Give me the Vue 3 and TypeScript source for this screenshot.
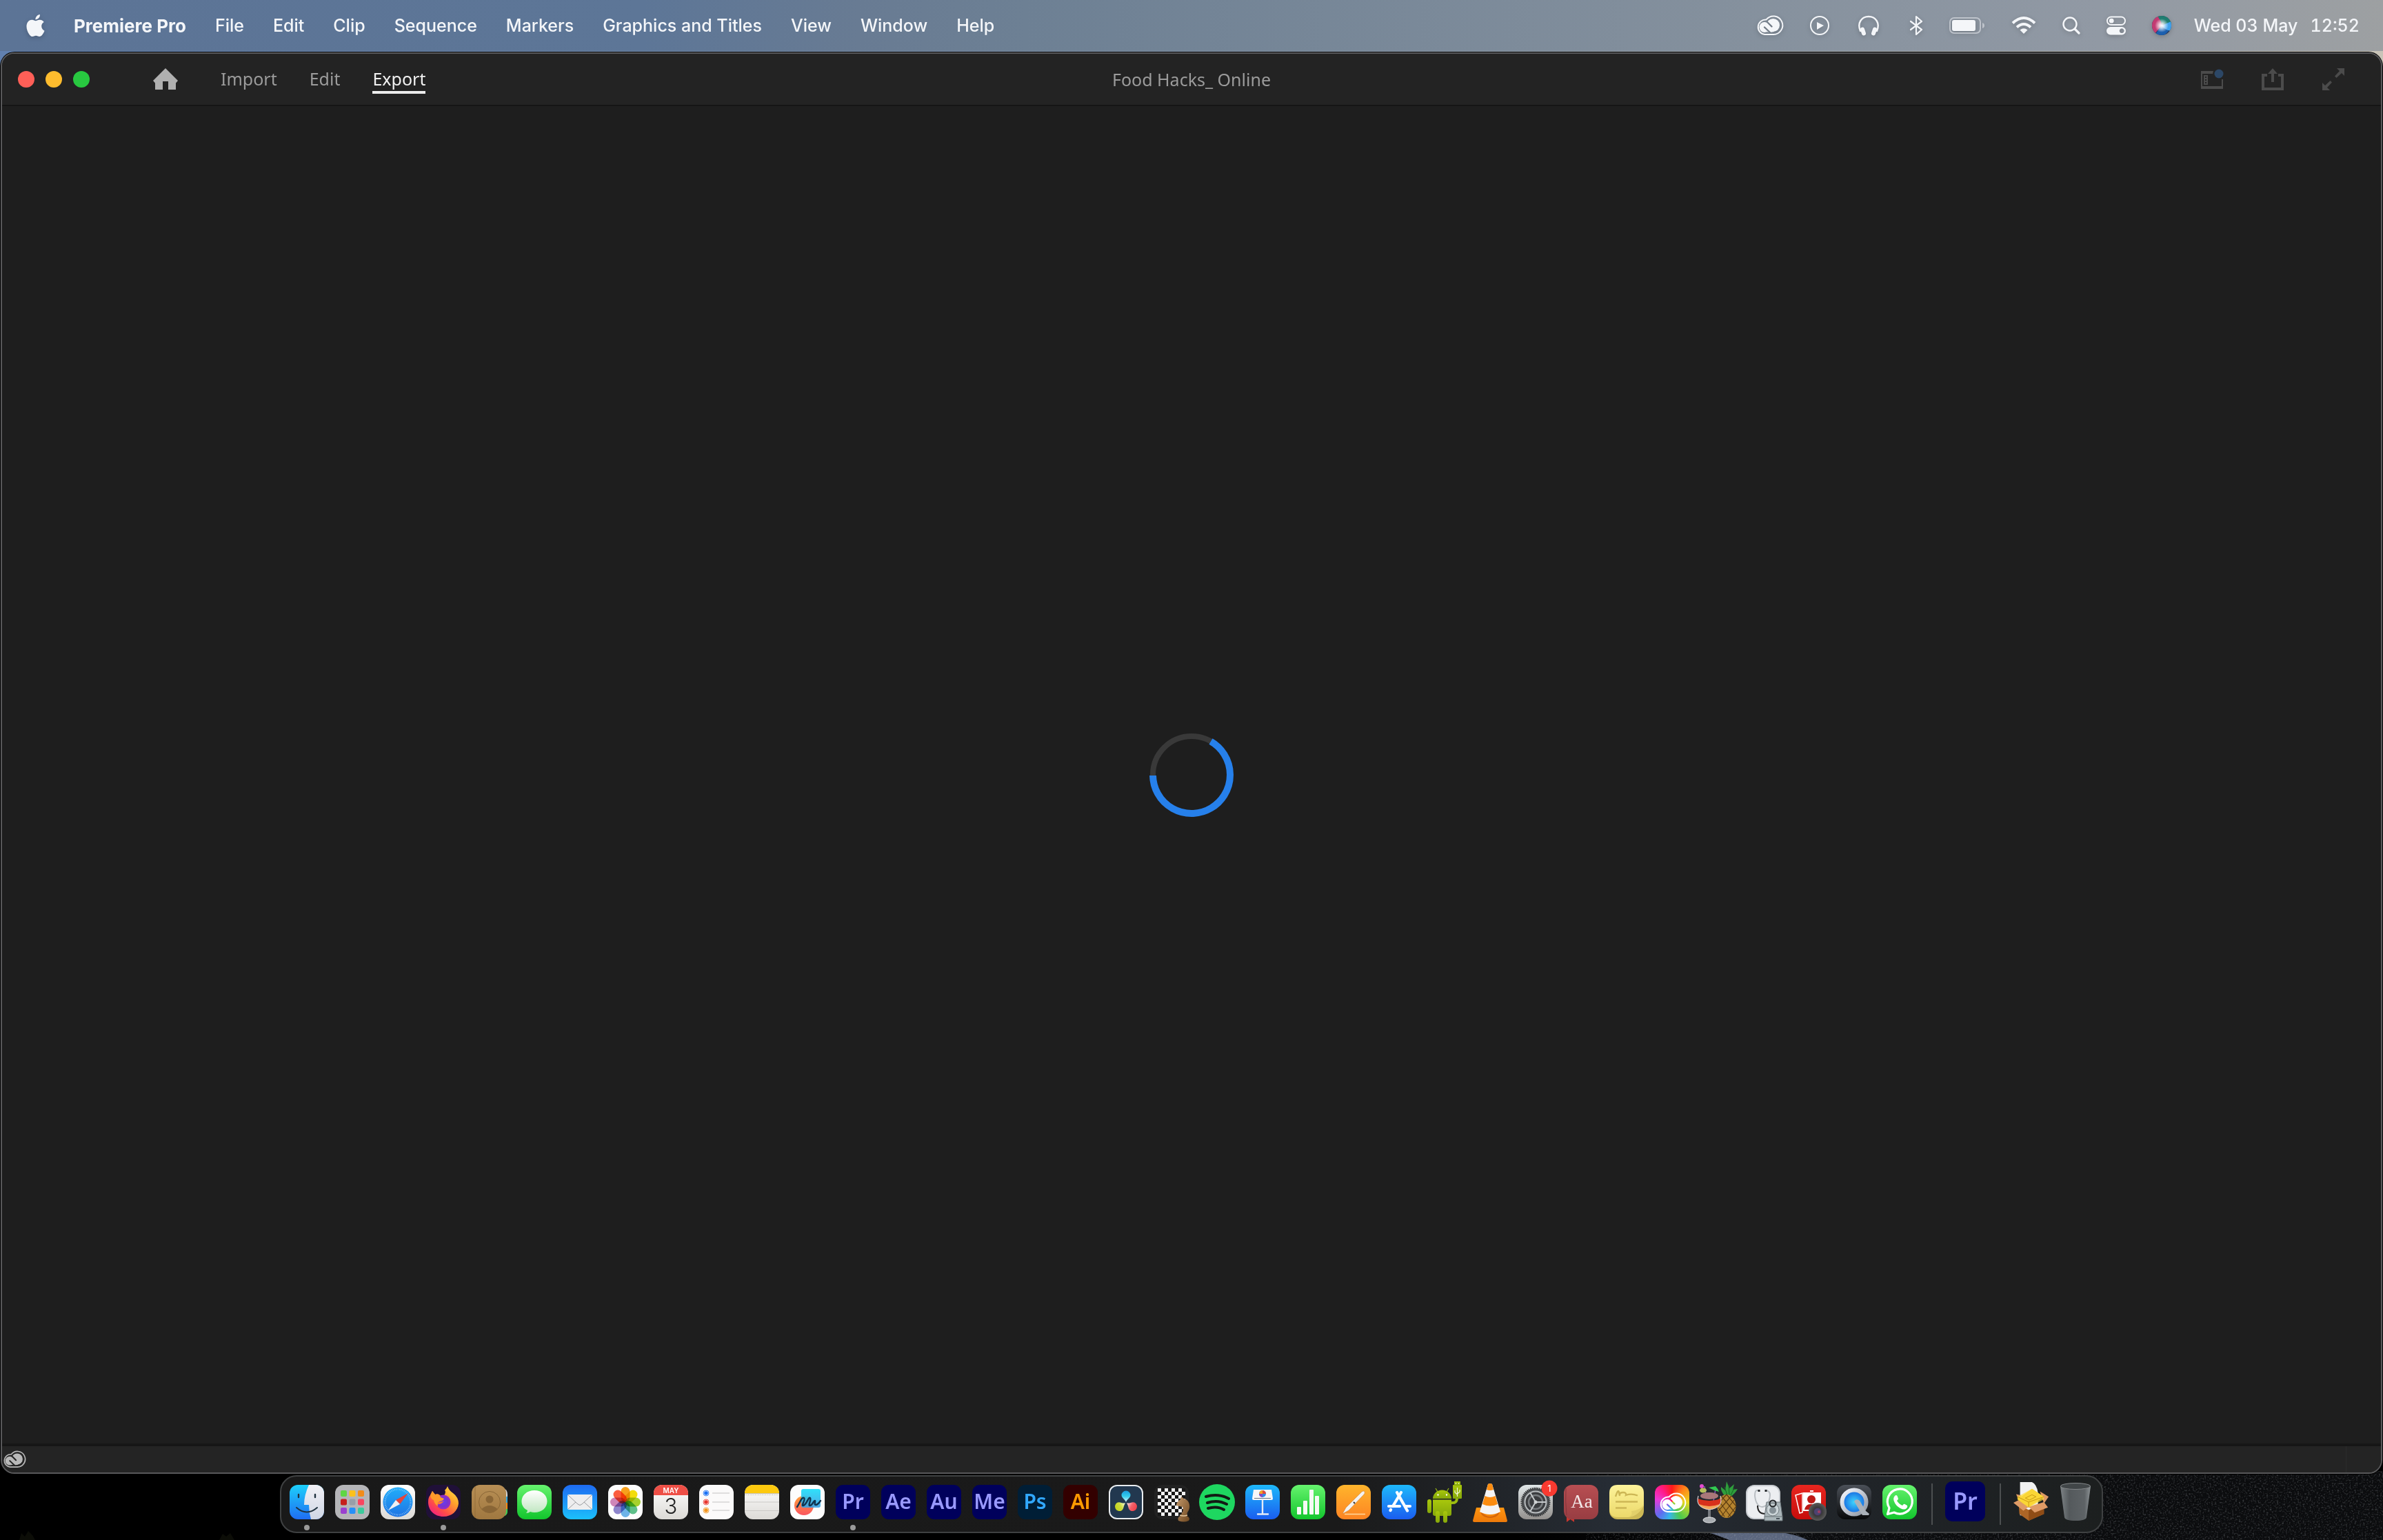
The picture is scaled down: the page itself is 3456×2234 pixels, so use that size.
<script setup lang="ts">
interface DockApp {
  id: string
  name: string
  running?: boolean
  letters?: string
  tile?: string
  ink?: string
}

const menus: string[] = ['File', 'Edit', 'Clip', 'Sequence', 'Markers', 'Graphics and Titles', 'View', 'Window', 'Help']

const apps: DockApp[] = [
  { id: 'finder', name: 'Finder', running: true },
  { id: 'launchpad', name: 'Launchpad' },
  { id: 'safari', name: 'Safari' },
  { id: 'firefox', name: 'Firefox', running: true },
  { id: 'contacts', name: 'Contacts' },
  { id: 'messages', name: 'Messages' },
  { id: 'mail', name: 'Mail' },
  { id: 'photos', name: 'Photos' },
  { id: 'calendar', name: 'Calendar' },
  { id: 'reminders', name: 'Reminders' },
  { id: 'notes', name: 'Notes' },
  { id: 'freeform', name: 'Freeform' },
  { id: 'pr', name: 'Premiere Pro', running: true, letters: 'Pr', tile: '#00005b', ink: '#9999ff' },
  { id: 'ae', name: 'After Effects', letters: 'Ae', tile: '#00005b', ink: '#9999ff' },
  { id: 'au', name: 'Audition', letters: 'Au', tile: '#00005b', ink: '#9999ff' },
  { id: 'me', name: 'Media Encoder', letters: 'Me', tile: '#00005b', ink: '#9999ff' },
  { id: 'ps', name: 'Photoshop', letters: 'Ps', tile: '#001e36', ink: '#31a8ff' },
  { id: 'ai', name: 'Illustrator', letters: 'Ai', tile: '#330000', ink: '#ff9a00' },
  { id: 'davinci', name: 'DaVinci Resolve' },
  { id: 'chess', name: 'Chess' },
  { id: 'spotify', name: 'Spotify' },
  { id: 'keynote', name: 'Keynote' },
  { id: 'numbers', name: 'Numbers' },
  { id: 'pages', name: 'Pages' },
  { id: 'appstore', name: 'App Store' },
  { id: 'android', name: 'Android File Transfer' },
  { id: 'vlc', name: 'VLC' },
  { id: 'settings', name: 'System Settings' },
  { id: 'dictionary', name: 'Dictionary' },
  { id: 'stickies', name: 'Stickies' },
  { id: 'cc', name: 'Creative Cloud' },
  { id: 'pina', name: 'Pineapple' },
  { id: 'disk', name: 'Disk Utility' },
  { id: 'booth', name: 'Photo Booth' },
  { id: 'quicktime', name: 'QuickTime Player' },
  { id: 'whatsapp', name: 'WhatsApp' },
]

const petals = [
  { turn: 0, fill: '#f7a01c' },
  { turn: 45, fill: '#f2dd0a' },
  { turn: 90, fill: '#a6d12c' },
  { turn: 135, fill: '#5fc08a' },
  { turn: 180, fill: '#6db3e8' },
  { turn: 225, fill: '#8e86cc' },
  { turn: 270, fill: '#cf86b8' },
  { turn: 315, fill: '#fb5d3f' },
]

const launchTiles = ['#5fd644', '#fcc11c', '#f28c1a', '#c61f1c', '#989fa8', '#fa4560', '#9a40cf', '#2690f8', '#3cca9c']
const reminderDots = [{ y: 12, c: '#1a72f5' }, { y: 25, c: '#e8352f' }, { y: 37, c: '#f3941c' }]
</script>

<template>
  <div class="desktop">
    <svg class="defs" width="0" height="0" aria-hidden="true">
      <defs>
        <linearGradient id="g-finder" x2="0" y2="1"><stop stop-color="#1dd0fb" /><stop offset="1" stop-color="#1f6df2" /></linearGradient>
        <linearGradient id="g-face" x2="0" y2="1"><stop stop-color="#f2f1f6" /><stop offset="1" stop-color="#cfd6e4" /></linearGradient>
        <linearGradient id="g-safari" x2="0" y2="1"><stop stop-color="#21aefa" /><stop offset="1" stop-color="#1f74e4" /></linearGradient>
        <linearGradient id="g-fire" x1="1" y1="0" x2="0.2" y2="1"><stop stop-color="#fff04a" /><stop offset="0.4" stop-color="#ffa32b" /><stop offset="0.75" stop-color="#ff4a4a" /><stop offset="1" stop-color="#ee1f83" /></linearGradient>
        <linearGradient id="g-green" x2="0" y2="1"><stop stop-color="#66f36e" /><stop offset="1" stop-color="#12c52c" /></linearGradient>
        <linearGradient id="g-mail" x2="0" y2="1"><stop stop-color="#1e6bf1" /><stop offset="1" stop-color="#1cc0fb" /></linearGradient>
        <linearGradient id="g-blue" x2="0" y2="1"><stop stop-color="#1eb9fb" /><stop offset="1" stop-color="#1a5df0" /></linearGradient>
        <linearGradient id="g-orange" x2="0" y2="1"><stop stop-color="#ffb52c" /><stop offset="1" stop-color="#fd8423" /></linearGradient>
        <linearGradient id="g-paper" x2="0" y2="1"><stop stop-color="#ffffff" /><stop offset="1" stop-color="#dcdad6" /></linearGradient>
        <linearGradient id="g-bubble" x2="0" y2="1"><stop stop-color="#ffffff" /><stop offset="1" stop-color="#bfe6c0" /></linearGradient>
        <linearGradient id="g-contacts" x2="0" y2="1"><stop stop-color="#b88f55" /><stop offset="1" stop-color="#a07840" /></linearGradient>
        <linearGradient id="g-grey" x2="0" y2="1"><stop stop-color="#dfe6e8" /><stop offset="1" stop-color="#94918e" /></linearGradient>
        <linearGradient id="g-cone" x2="0" y2="1"><stop stop-color="#ff9510" /><stop offset="1" stop-color="#ee7a0a" /></linearGradient>
        <linearGradient id="g-book" x2="0" y2="1"><stop stop-color="#b84e52" /><stop offset="1" stop-color="#983d42" /></linearGradient>
        <linearGradient id="g-sticky" x2="0" y2="1"><stop stop-color="#fdf39a" /><stop offset="1" stop-color="#ecd96b" /></linearGradient>
        <linearGradient id="g-red" x2="0" y2="1"><stop stop-color="#e8261f" /><stop offset="1" stop-color="#c60d0b" /></linearGradient>
        <linearGradient id="g-dark" x2="0" y2="1"><stop stop-color="#4b5058" /><stop offset="1" stop-color="#08090a" /></linearGradient>
        <linearGradient id="g-q" x2="1" y2="1"><stop stop-color="#f5f8ff" /><stop offset="1" stop-color="#8c94a0" /></linearGradient>
        <linearGradient id="g-bronze" x2="1" y2="1"><stop stop-color="#c4996a" /><stop offset="1" stop-color="#6e4720" /></linearGradient>
        <linearGradient id="g-bin" x2="1" y2="0"><stop stop-color="#7d8386" /><stop offset="0.3" stop-color="#54595c" /><stop offset="0.8" stop-color="#5e6366" /><stop offset="1" stop-color="#8d9396" /></linearGradient>
        <linearGradient id="g-free" x2="0" y2="1"><stop stop-color="#18defb" /><stop offset="1" stop-color="#3c9fe2" /></linearGradient>
        <linearGradient id="g-coral" x2="0" y2="1"><stop stop-color="#ff9f3a" /><stop offset="1" stop-color="#fb5560" /></linearGradient>
        <linearGradient id="g-droid" x2="0" y2="1"><stop stop-color="#a9c70c" /><stop offset="1" stop-color="#86a80a" /></linearGradient>
        <linearGradient id="g-drop-blue" x2="0" y2="1"><stop stop-color="#1a9ee0" /><stop offset="0.5" stop-color="#34cdec" /><stop offset="1" stop-color="#e8fbff" /></linearGradient>
        <linearGradient id="g-drop-red" x2="0" y2="1"><stop stop-color="#ee3f48" /><stop offset="0.5" stop-color="#f2616a" /><stop offset="1" stop-color="#ffe9ea" /></linearGradient>
        <linearGradient id="g-drop-lime" x2="0" y2="1"><stop stop-color="#c2d31c" /><stop offset="0.5" stop-color="#cddb3e" /><stop offset="1" stop-color="#fbfde0" /></linearGradient>
        <linearGradient id="g-ground"><stop stop-color="#0b0c0e" stop-opacity="0" /><stop offset="0.3" stop-color="#0b0c0e" /></linearGradient>
        <radialGradient id="g-globe"><stop stop-color="#6a3cf0" /><stop offset="0.6" stop-color="#7634cf" /><stop offset="1" stop-color="#a02bc0" /></radialGradient>
        <radialGradient id="g-qblue"><stop stop-color="#3fd6fd" /><stop offset="1" stop-color="#1464e0" /></radialGradient>
        <radialGradient id="g-lens"><stop stop-color="#7d83a8" /><stop offset="0.4" stop-color="#40324e" /><stop offset="0.5" stop-color="#3a3a3a" /><stop offset="1" stop-color="#5b5b5b" /></radialGradient>
        <radialGradient id="g-siri"><stop stop-color="#ffffff" /><stop offset="0.3" stop-color="#ffffff" stop-opacity="0.8" /><stop offset="1" stop-color="#ffffff" stop-opacity="0" /></radialGradient>
        <clipPath id="tile-clip"><rect width="50" height="50" rx="12" /></clipPath>
        <clipPath id="siri-clip"><circle cx="14" cy="14" r="14" /></clipPath>
        <mask id="cloud-mask" maskUnits="userSpaceOnUse" x="0" y="0" width="40" height="30">
          <circle cx="12" cy="17.5" r="7.5" fill="#fff" />
          <circle cx="24.5" cy="14.5" r="9.5" fill="#fff" />
          <path d="M12 10L26 24L20 25L8 23Z" fill="#fff" />
          <path d="M14 8L22.5 16.5M12 17.5L22 27" stroke="#000" stroke-width="2.4" stroke-linecap="round" fill="none" />
        </mask>
        <g id="cloud">
          <path d="M12.5 28A10.6 10.6 0 1 1 14.5 6.500A13.3 13.3 0 1 1 24.5 28Z" fill="none" stroke="currentColor" stroke-width="2" />
          <rect width="40" height="30" fill="currentColor" mask="url(#cloud-mask)" />
        </g>
        <path id="drop" d="M25 25C23 20 18.5 19 18.5 15A6.5 6.5 0 0 1 31.500 15C31.500 19 27 20 25 25Z" />
        <pattern id="checks" width="10" height="10" patternUnits="userSpaceOnUse" x="5" y="5"><rect width="10" height="10" fill="#161616" /><path d="M0 0h5v5H0zM5 5h5v5H5z" fill="#f2f2f2" /></pattern>
        <filter id="grain" x="0" y="0" width="1" height="1">
          <feTurbulence type="fractalNoise" baseFrequency="0.4" numOctaves="2" seed="4" />
          <feColorMatrix values="0 0 0 0 0.4  0 0 0 0 0.43  0 0 0 0 0.46  1.4 0 0 0 -0.7" />
        </filter>
      </defs>
    </svg>

    <svg class="ground" viewBox="0 0 3456 100" preserveAspectRatio="none" aria-hidden="true">
      <rect x="2200" width="1256" height="100" fill="url(#g-ground)" />
      <path d="M2474 88H2578Q2606 92 2622 100H2508Q2488 92 2474 88Z" fill="#5b667e" />
      <rect x="2300" width="1156" height="100" filter="url(#grain)" opacity="0.6" />
      <path d="M28 100l3-10 5 5 5-8 6 6 4 7zM318 100l5-9 5 4 6-5 6 10z" fill="#0c0d07" />
    </svg>

    <header class="menubar">
      <nav class="menus" aria-label="Menu bar">
        <button aria-label="Apple menu">
          <svg width="27" height="32" viewBox="2 0 20 24"><path fill="currentColor" d="M12.152 6.896c-.948 0-2.415-1.078-3.96-1.04-2.04.027-3.91 1.183-4.961 3.014-2.117 3.675-.546 9.103 1.519 12.09 1.013 1.454 2.208 3.09 3.792 3.039 1.52-.065 2.09-.987 3.935-.987 1.831 0 2.35.987 3.96.948 1.637-.026 2.676-1.48 3.676-2.948 1.156-1.688 1.636-3.325 1.662-3.415-.039-.013-3.182-1.221-3.22-4.857-.026-3.04 2.48-4.494 2.597-4.559-1.429-2.09-3.623-2.324-4.39-2.376-2-.156-3.675 1.09-4.61 1.09zM15.53 3.83c.843-1.012 1.4-2.427 1.245-3.83-1.207.052-2.662.805-3.532 1.818-.78.896-1.454 2.338-1.273 3.714 1.338.104 2.715-.688 3.559-1.701" /></svg>
        </button>
        <button class="app-name">Premiere Pro</button>
        <button v-for="menu in menus" :key="menu">{{ menu }}</button>
      </nav>
      <div class="status">
        <button aria-label="Creative Cloud"><svg width="40" height="30" viewBox="0 0 40 30"><use href="#cloud" /></svg></button>
        <button class="playing" aria-label="Now playing"><svg width="28" height="30" viewBox="0 0 28 30"><circle cx="14" cy="15" r="13" fill="none" stroke="currentColor" stroke-width="2" /><path d="M10 10l10 5-10 6z" fill="currentColor" /></svg></button>
        <button aria-label="Sound"><svg width="30" height="30" viewBox="0 0 30 30" fill="none" stroke="currentColor" stroke-linecap="round"><path d="M3 23C-2 11 5 2 15 2s17 9 12 21" stroke-width="2.4" /><path d="M6 20.500L8 26.500M24 20.500L22 26.500" stroke-width="6" /></svg></button>
        <button class="bluetooth" aria-label="Bluetooth"><svg width="20" height="30" viewBox="0 0 20 30" fill="none" stroke="currentColor" stroke-width="2.2" stroke-linejoin="round" stroke-linecap="round"><path d="M2 9L18 21L10 28V2L18 9L2 21" /></svg></button>
        <button aria-label="Battery"><svg width="52" height="26" viewBox="0 0 52 26"><rect x="1" y="2" width="44" height="22" rx="6" fill="none" stroke="currentColor" stroke-opacity="0.5" stroke-width="2" /><rect x="4" y="5" width="34" height="16" rx="3" fill="currentColor" /><path d="M48 9q3 1 3 4t-3 4z" fill="currentColor" opacity="0.5" /></svg></button>
        <button aria-label="Wi-Fi"><svg width="36" height="28" viewBox="0 0 36 28" fill="none" stroke="currentColor" stroke-width="4"><path d="M2 10.500Q18-4.500 34 10.500" /><path d="M8 16.500Q18 7.500 28 16.500" /><path d="M18 26L12.500 20.500Q18 16 23.500 20.500Z" fill="currentColor" stroke="none" /></svg></button>
        <button aria-label="Search"><svg width="26" height="28" viewBox="0 0 26 28" fill="none" stroke="currentColor"><circle cx="11" cy="12" r="9.5" stroke-width="2.4" /><path d="M18 19l6 6" stroke-width="3.2" stroke-linecap="round" /></svg></button>
        <button aria-label="Control Centre"><svg width="28" height="28" viewBox="0 0 29 28"><rect x="1" y="1" width="27" height="12" rx="6" fill="none" stroke="currentColor" stroke-width="2" /><circle cx="7.500" cy="7" r="3.500" fill="currentColor" /><path fill-rule="evenodd" fill="currentColor" d="M6 16h17a6 6 0 0 1 0 12H6a6 6 0 0 1 0-12zm17 2.500a3.500 3.500 0 1 0 .01 0z" /></svg></button>
        <button aria-label="Siri"><svg width="28" height="28" viewBox="0 0 28 28"><g clip-path="url(#siri-clip)"><rect width="28" height="28" fill="#2a3a5c" /><path d="M0 0H14L13 15L4 26L0 20Z" fill="#c23a72" /><path d="M8 0H28V12L15 12Z" fill="#1f7d70" /><path d="M14 14L28 8V22L18 20Z" fill="#3fa2ee" /><path d="M13 15L24 22L18 28H4Z" fill="#1b5fae" /><circle cx="14" cy="14" r="10" fill="url(#g-siri)" /></g></svg></button>
        <button class="clock"><span>Wed 03 May</span><span>12:52</span></button>
      </div>
    </header>

    <main class="window">
      <header class="titlebar">
        <div class="left">
          <div class="lights">
            <button class="light close" aria-label="Close"></button>
            <button class="light minimise" aria-label="Minimise"></button>
            <button class="light zoom" aria-label="Zoom"></button>
          </div>
          <button class="home" aria-label="Home"><svg width="36" height="32" viewBox="0 0 36 32"><path d="M18 0L36 18L33 21.500V31H22V19H14V31H3V21.500L0 18Z" fill="#b0b0b0" /></svg></button>
          <nav class="tabs" aria-label="Workspace">
            <a href="#import">Import</a>
            <a href="#edit">Edit</a>
            <a href="#export" class="active" aria-current="page">Export</a>
          </nav>
        </div>
        <h1>Food Hacks_ Online</h1>
        <div class="tools">
          <button aria-label="Workspaces"><svg width="32" height="32" viewBox="0 0 32 32"><path d="M0 4h18l-1 4H2v18h28V16h2v14H0z" fill="#4b4b4b" /><path fill-rule="evenodd" d="M4 10h6v14H4zM6 12v2h2v-2zM6 16v2h2v-2zM6 20v2h2v-2z" fill="#4b4b4b" /><circle cx="26" cy="8" r="6.500" fill="#2c4766" /></svg></button>
          <button aria-label="Quick export"><svg width="32" height="32" viewBox="0 0 32 32"><path d="M0 8h8v4H4v16h24V12h-4V8h8v24H0z" fill="#4b4b4b" /><path d="M16 0l7 8h-5v12h-4V8H9z" fill="#4b4b4b" /></svg></button>
          <button aria-label="Full screen"><svg width="32" height="32" viewBox="0 0 32 32"><path d="M21 0H32V11L28 7L20.500 14L18 11.500L25 4ZM11 32H0V21L4 25L11.500 18L14 20.500L7 28Z" fill="#4b4b4b" /></svg></button>
        </div>
      </header>
      <section class="stage" role="status" aria-label="Loading">
        <svg width="122" height="122" viewBox="0 0 122 122" fill="none">
          <circle cx="61" cy="61" r="56" stroke="#393939" stroke-width="8" />
          <path d="M89 12.500A56 56 0 1 1 5 62" stroke="#2680eb" stroke-width="10" />
        </svg>
      </section>
      <footer class="statusbar">
        <button aria-label="Creative Cloud sync"><svg width="34" height="26" viewBox="0 0 40 30"><use href="#cloud" /></svg></button>
        <span class="grip"></span>
      </footer>
    </main>

    <nav class="dock" aria-label="Dock">
      <button v-for="app in apps" :key="app.id" :class="{ running: app.running }" :aria-label="app.name">
        <svg width="50" height="50" viewBox="0 0 50 50">
          <template v-if="app.letters">
            <rect width="50" height="50" rx="11" :fill="app.tile" />
            <text x="25" y="35" text-anchor="middle" class="adobe" :fill="app.ink">{{ app.letters }}</text>
          </template>
          <g v-else-if="app.id === 'finder'" clip-path="url(#tile-clip)">
            <rect width="50" height="50" fill="url(#g-finder)" />
            <path d="M28 0Q21 15 21 29H28Q28 40 31 50H50V0Z" fill="url(#g-face)" />
            <path d="M13 14v4M37 14v4" stroke="#20323f" stroke-width="2.4" stroke-linecap="round" />
            <path d="M10 33Q25 46 40 33" fill="none" stroke="#20323f" stroke-width="2" stroke-linecap="round" />
          </g>
          <template v-else-if="app.id === 'launchpad'">
            <rect width="50" height="50" rx="12" fill="#b5b5b8" />
            <rect v-for="(tile, i) in launchTiles" :key="tile" :x="8 + (i % 3) * 12.5" :y="8 + Math.floor(i / 3) * 12.5" width="9" height="9" rx="2" :fill="tile" />
          </template>
          <template v-else-if="app.id === 'safari'">
            <rect width="50" height="50" rx="12" fill="url(#g-paper)" />
            <circle cx="25" cy="25" r="21.500" fill="url(#g-safari)" />
            <circle cx="25" cy="25" r="18.500" fill="none" stroke="#a9d6fb" stroke-width="2.500" stroke-dasharray="0.6 1.8" />
            <path d="M40 12L28 28L22 22Z" fill="#e8443a" /><path d="M11 37L22 22L28 28Z" fill="#f0f0f2" />
          </template>
          <template v-else-if="app.id === 'firefox'">
            <rect width="50" height="50" rx="12" fill="#201038" />
            <path d="M25 46C12 46 3 37 3 25C3 20 4 17 6 15L9 9L13 14Q18 12 21 16L24 19Q30 10 27 8Q30 5 31 2Q33 8 39 12Q47 18 47 27C46 38 37 46 25 46Z" fill="url(#g-fire)" />
            <circle cx="25" cy="25" r="10.500" fill="url(#g-globe)" />
            <path d="M9 9L13 14Q19 12 21 18L26 20Q24 24 19 24Q16 26 17 31Q12 28 11 22Q7 21 6 15Z" fill="#ff9a2a" />
            <path d="M18 24Q22 26 26 23Q22 29 17 28Z" fill="#ff7a32" />
          </template>
          <template v-else-if="app.id === 'contacts'">
            <path d="M44 6h4q4 2 4 8v3h-8z" fill="#d5d5d5" /><path d="M44 17h8v9h-8z" fill="#35a7dd" /><path d="M44 26h8v9h-8z" fill="#f08a18" /><path d="M44 35h8v4q0 4-4 6h-4z" fill="#3fd056" />
            <rect width="50" height="50" rx="12" fill="url(#g-contacts)" />
            <path d="M5 2v46" stroke="#8f6a37" stroke-width="0.8" />
            <circle cx="26" cy="25" r="15.500" fill="none" stroke="#8a6636" stroke-width="1" /><circle cx="26" cy="21" r="5.500" fill="#8a6636" /><path d="M14.500 35Q26 25 37.500 35Q26 46 14.500 35Z" fill="#8a6636" />
          </template>
          <template v-else-if="app.id === 'messages'">
            <rect width="50" height="50" rx="12" fill="url(#g-green)" />
            <path d="M25 8C36 8 43.500 15 43.500 24S36 40 25 40Q22 40 19 39Q17 41 13 41Q15 39 15 37C9 34 6.500 29 6.500 24C6.500 15 14 8 25 8Z" fill="url(#g-bubble)" />
          </template>
          <template v-else-if="app.id === 'mail'">
            <rect width="50" height="50" rx="12" fill="url(#g-mail)" />
            <rect x="7" y="14" width="36" height="22" rx="2" fill="#eeeeef" />
            <path d="M8 15L22 28Q25 31 28 28L42 15M8 35L19 25M42 35L31 25" fill="none" stroke="#9a9ca0" stroke-width="1" />
          </template>
          <template v-else-if="app.id === 'photos'">
            <rect width="50" height="50" rx="12" fill="#fdfdfd" />
            <g class="petals"><rect v-for="petal in petals" :key="petal.turn" x="18.500" y="3" width="13" height="22" rx="6.500" :fill="petal.fill" :transform="`rotate(${petal.turn} 25 25)`" /></g>
          </template>
          <template v-else-if="app.id === 'calendar'">
            <g clip-path="url(#tile-clip)"><rect width="50" height="50" fill="url(#g-paper)" /><rect width="50" height="15" fill="#ee4f46" /></g>
            <text x="25" y="12" text-anchor="middle" class="month">MAY</text><text x="25" y="42" text-anchor="middle" class="day">3</text>
          </template>
          <template v-else-if="app.id === 'reminders'">
            <rect width="50" height="50" rx="12" fill="#fbfafa" />
            <g v-for="dot in reminderDots" :key="dot.y"><circle cx="10" :cy="dot.y" r="4" fill="none" :stroke="dot.c" stroke-width="0.8" /><circle cx="10" :cy="dot.y" r="2.800" :fill="dot.c" /><path :d="`M19 ${dot.y}H44`" stroke="#c3c2c2" /></g>
          </template>
          <g v-else-if="app.id === 'notes'" clip-path="url(#tile-clip)">
            <rect width="50" height="50" fill="url(#g-paper)" /><rect width="50" height="12" fill="#fdc90e" /><path d="M0 14.500H50" stroke="#b4b2ae" stroke-dasharray="1 1.5" /><path d="M0 12.500H50" stroke="#c7bfa6" /><path d="M0 25H50M0 37.500H50" stroke="#cbc9c6" />
          </g>
          <template v-else-if="app.id === 'freeform'">
            <rect width="50" height="50" rx="12" fill="#fdfdfd" /><circle cx="20" cy="30" r="14" fill="url(#g-coral)" /><rect x="16" y="6" width="28" height="27" rx="3" fill="url(#g-free)" opacity="0.9" />
            <path d="M10 32C15 24 17 17 20 19C23 21 15 31 19 30C24 29 26 17 29 19C31 21 25 31 29 30C33 29 34 22 36 23C37 25 34 29 37 29Q40 29 44 23" fill="none" stroke="#103450" stroke-width="2.4" stroke-linecap="round" />
          </template>
          <template v-else-if="app.id === 'davinci'">
            <rect x="1" y="1" width="48" height="48" rx="11" fill="#22384f" stroke="#e9edf0" stroke-width="2" />
            <use href="#drop" fill="url(#g-drop-blue)" /><use href="#drop" fill="url(#g-drop-red)" transform="rotate(120 25 26)" /><use href="#drop" fill="url(#g-drop-lime)" transform="rotate(240 25 26)" />
          </template>
          <template v-else-if="app.id === 'chess'">
            <rect width="50" height="50" rx="12" fill="#222222" /><rect x="5" y="5" width="40" height="40" fill="url(#checks)" />
            <path d="M35 52q-2-5 3-7l2-4q3-4 1-9l-9-2q0-5 6-9l1-4 4 3q7 2 8 9q1 6-3 11l-1 5q6 3 3 7q-7 3-15 0z" fill="url(#g-bronze)" />
            <path d="M37 44q6 2 11 0" stroke="#e6c79c" fill="none" stroke-width="1.5" />
          </template>
          <template v-else-if="app.id === 'spotify'">
            <circle cx="25" cy="25" r="26" fill="#1ed760" /><path d="M9 17Q27 12 42 20M11 26Q26 21 39 28M12 34Q25 30 35 36" fill="none" stroke="#121a14" stroke-linecap="round" stroke-width="4" />
          </template>
          <template v-else-if="app.id === 'keynote'">
            <rect width="50" height="50" rx="12" fill="url(#g-blue)" /><path d="M12 7H38L40 20Q40 22 38 22H12Q10 22 10 20Z" fill="#f6f6f8" /><path d="M13 19.500H37" stroke="#6a7480" /><path d="M25 22V42M18 42.500H33" stroke="#e4ebf8" stroke-width="2.4" stroke-linecap="round" />
            <circle cx="25" cy="13" r="5" fill="#2b8fe8" /><path d="M25 13V8A5 5 0 0 0 20 13Z" fill="#f2a324" /><path d="M25 13V8A5 5 0 0 1 30 13Z" fill="#e34a3c" /><path d="M25 13H20A5 5 0 0 0 25 18Z" fill="#8a46c4" />
          </template>
          <template v-else-if="app.id === 'numbers'">
            <rect width="50" height="50" rx="12" fill="url(#g-green)" /><g fill="#f5faf4"><rect x="9" y="32" width="6" height="11" rx="1" /><rect x="18" y="23" width="6" height="20" rx="1" /><rect x="27" y="7" width="6" height="36" rx="1" /><rect x="35" y="16" width="6" height="27" rx="1" /></g>
          </template>
          <template v-else-if="app.id === 'pages'">
            <rect width="50" height="50" rx="12" fill="url(#g-orange)" /><path d="M9 42L14 33L37 10Q40 8 41 10T40 14L18 37Z" fill="#f4f2f0" stroke="#c97a28" stroke-width="0.5" /><path d="M25 25l2 2" stroke="#333" stroke-width="2" /><path d="M12 42.500H42" stroke="#ffd9a0" stroke-width="1.5" />
          </template>
          <template v-else-if="app.id === 'appstore'">
            <rect width="50" height="50" rx="12" fill="url(#g-blue)" /><path d="M28 11L16 31M13 36L12.500 37M22 11L37 37.500M10 31H26M34 31H41" fill="none" stroke="#fafcff" stroke-width="4.2" stroke-linecap="round" />
          </template>
          <g v-else-if="app.id === 'android'" fill="url(#g-droid)">
            <path d="M8 20A13.500 12.500 0 0 1 35 20Z" /><path d="M12 5l3 5M31 5l-3 5" stroke="#9cbc10" stroke-width="1.2" /><path d="M8 21.500H35V42Q35 45 32 45H11Q8 45 8 42Z" /><rect y="21" width="6" height="20" rx="3" /><rect x="12" y="38" width="6" height="17" rx="3" /><rect x="23" y="38" width="6" height="17" rx="3" /><path d="M35 26Q43 27 43 19" fill="none" stroke="#9cbc10" stroke-width="4" /><rect x="37" y="0" width="13" height="20" rx="1" /><rect x="39" y="-5" width="9" height="6" />
            <path d="M15.500 14.500v.1M28 14.500v.1" stroke="#fff" stroke-width="2.4" stroke-linecap="round" /><path d="M43.500 4v13M40 8v3l3.500 3M47 7v3l-3.500 3" fill="none" stroke="#f1f6d8" stroke-width="1.2" /><path d="M41.500-3v2M45.500-3v2" stroke="#e7efc2" stroke-width="1.2" />
          </g>
          <template v-else-if="app.id === 'vlc'">
            <path d="M5 33H45L50 52Q50 54 48 54H2Q0 54 0 52Z" fill="url(#g-cone)" /><path d="M11 38Q25 54 39 38Q38 47 25 48Q12 47 11 38Z" fill="#d5650a" /><path d="M22-1Q25-3 28-1L40 39Q25 47 10 39Z" fill="#f4f4f5" /><path d="M22-1Q25-3 28-1L30 7Q25 9 20 7ZM17.500 16Q25 20 32.500 16L36 28Q25 33 14 28Z" fill="#fb8c10" />
          </template>
          <template v-else-if="app.id === 'settings'">
            <rect width="50" height="50" rx="12" fill="url(#g-grey)" /><circle cx="25" cy="25" r="20" fill="#505356" stroke="#303234" stroke-width="3" stroke-dasharray="1.4 1.2" /><circle cx="25" cy="25" r="15.500" fill="#3b3d40" stroke="#b9bdbf" stroke-width="2" /><circle cx="25" cy="25" r="10" fill="none" stroke="#777b7e" stroke-width="2.5" /><path d="M25 25H40M25 25L17.500 12M25 25L17.500 38" stroke="#c6cacc" stroke-width="2" /><circle cx="25" cy="25" r="2.500" fill="#d0d3d4" />
            <circle cx="45" cy="5" r="11.500" fill="#f93a30" /><text x="45" y="10" text-anchor="middle" class="badge">1</text>
          </template>
          <template v-else-if="app.id === 'dictionary'">
            <path d="M4 44H15V54L9.500 50L4 54Z" fill="#c9362e" /><rect width="50" height="50" rx="12" fill="url(#g-book)" /><path d="M3 5Q2 25 4 44" fill="none" stroke="#83343a" /><text x="26" y="33" text-anchor="middle" class="aa">Aa</text>
          </template>
          <template v-else-if="app.id === 'stickies'">
            <rect y="3" width="50" height="47" rx="12" fill="#cdb956" /><path d="M12 0H38Q50 0 50 12V30Q43 44 28 47H12Q0 47 0 34V12Q0 0 12 0Z" fill="url(#g-sticky)" /><path d="M50 28Q45 37 32 38Q34 44 28 47Q44 45 50 28Z" fill="#e2d06a" />
            <path d="M9 17Q13 5 14 11T15 14T20 11T24 15Q32 12 41 15.500M9 24.500H41M9 33.500H25" fill="none" stroke="#cdb755" stroke-width="2.4" />
          </template>
          <template v-else-if="app.id === 'cc'">
            <foreignObject width="50" height="50"><div class="rainbow"></div></foreignObject><g transform="translate(6 11)" class="white"><use href="#cloud" /></g>
          </template>
          <template v-else-if="app.id === 'pina'">
            <path d="M35 16Q29 8 30 3L36 8L38-5L42 5L49-1L47 7L54 6Q50 13 44 17Z" fill="#2f9e3c" /><path d="M39 15L35 3M42 15L41 0M44 15L49 5" stroke="#176325" /><ellipse cx="38" cy="31" rx="13.500" ry="17" fill="#b5842f" /><path d="M27 24L44 46M31 17L50 40M38 14L52 31M26 33L35 46M49 22L31 45M45 16L26 38M38 14L25 28M52 31L40 47" stroke="#5c3c11" stroke-width="1.2" />
            <path d="M6 2l3 18M22 6l-3 18" stroke="#8e5cc0" stroke-width="1.5" /><circle cx="2" cy="2" r="3" fill="#e34bd0" /><ellipse cx="4" cy="8" rx="5" ry="3.500" fill="#b7c05c" /><path d="M12 4L22 2Q26 6 27 10Q19 8 12 4Z" fill="#32c951" />
            <ellipse cx="13" cy="16" rx="13" ry="5" fill="#a9777a" /><path d="M-4 20Q-5 33 13 36Q31 33 30 20Q13 26-4 20Z" fill="#d8301c" /><path d="M-2 28Q3 36 13 36T28 28Q13 34-2 28Z" fill="#f3a55a" /><path d="M-3 16Q-8 33 13 36Q34 33 29 16" fill="none" stroke="#d8cfd2" stroke-width="1.2" /><path d="M12 36V49M14 36V49" stroke="#c9ccd0" /><ellipse cx="13" cy="51" rx="9" ry="4" fill="#a8acb0" stroke="#e8eaec" />
          </template>
          <template v-else-if="app.id === 'disk'">
            <rect x="1" y="1" width="48" height="48" rx="11" fill="#eceef1" stroke="#c7cbd0" stroke-width="2" /><path d="M20 8H16Q13 8 13 16Q15 32 24 32Q34 30 35 15Q35 8 28 8" fill="none" stroke="#b9bec3" stroke-width="2" /><path d="M19 7v3M29 7v3" stroke="#26292c" stroke-width="3" /><path d="M17 30Q17 42 28 42" fill="none" stroke="#222" stroke-width="2" />
            <path d="M30 25H50L53 46V52H27V46Z" fill="#aab5b9" stroke="#6b7479" stroke-width="1" /><circle cx="39" cy="36" r="9" fill="#ccd5d8" stroke="#727b80" /><circle cx="39" cy="37" r="5" fill="#869197" /><circle cx="39" cy="27" r="4.500" fill="none" stroke="#202326" stroke-width="2" /><path d="M27 46H53" stroke="#687277" /><path d="M44 49h5" stroke="#49535a" stroke-width="2" />
          </template>
          <template v-else-if="app.id === 'booth'">
            <rect width="50" height="50" rx="12" fill="url(#g-red)" /><path d="M6 15L16 12V40L12 41Z" fill="none" stroke="#fff" stroke-width="1.5" /><rect x="17" y="11" width="26" height="27" fill="#fff" /><circle cx="29" cy="21" r="6" fill="#bd1915" /><path d="M19 36Q21 27 29 28Q38 28 40 36Z" fill="#bd1915" /><path d="M27 9h5" stroke="#fff" stroke-width="2" /><circle cx="38" cy="39" r="13" fill="url(#g-lens)" /><circle cx="38" cy="39" r="5" fill="#4c4470" /><circle cx="40" cy="39" r="2" fill="#a23b62" />
          </template>
          <template v-else-if="app.id === 'quicktime'">
            <rect width="50" height="50" rx="12" fill="url(#g-dark)" /><circle cx="25" cy="25" r="17.500" fill="url(#g-qblue)" stroke="url(#g-q)" stroke-width="6" /><path d="M25 24L37 44H46L47 42L42 38L33 23Q28 19 25 24Z" fill="#aab1b9" />
          </template>
          <template v-else>
            <rect width="50" height="50" rx="12" fill="url(#g-green)" /><path d="M7.500 42.500L10 33.500A18 18 0 1 1 17 40Z" fill="none" stroke="#fff" stroke-width="3.2" stroke-linejoin="round" /><path d="M18 16Q20 14 21.500 16L23 20Q23 21.500 21 23Q24 28 29 30Q31 27 32.500 28L36 30Q37 32 35 34Q32 37 26 34Q19 30 17 24Q15 19 18 16Z" fill="#fff" />
          </template>
        </svg>
      </button>
      <span class="divider"></span>
      <button class="large" aria-label="Premiere Pro window">
        <svg width="58" height="58" viewBox="0 0 58 58"><rect width="58" height="58" rx="10" fill="#00005b" /><text x="29" y="41" text-anchor="middle" class="adobe big" fill="#9999ff">Pr</text></svg>
      </button>
      <span class="divider"></span>
      <button class="large" aria-label="Downloads">
        <svg width="52" height="58" viewBox="0 0 54 58">
          <path d="M10 0H28Q35 3 37 16V50H10Z" fill="#f1f1f1" /><path d="M8 34L23 42V58L9 48ZM23 42L46 32V48L23 58Z" fill="#ad6526" /><path d="M23 42L46 32V48L23 58Z" fill="#8f4c16" /><path d="M8 27L4 18L12 20ZM40 14L53 22L46 32ZM8 27L0 31L15 43L23 37ZM46 30L52 38L32 46L23 37Z" fill="#df9b66" /><path d="M28 10L46 22L23 38L6 26Z" fill="#edc22b" /><path d="M28 10L46 22V26L23 38L6 26V22Z" fill="#ffde3c" opacity="0.7" /><path d="M6 22L23 30L46 22M23 30V38M18 24L28 19L34 22L24 27Z" stroke="#c99812" fill="none" />
        </svg>
      </button>
      <button class="bin" aria-label="Bin">
        <svg width="44" height="56" viewBox="0 0 44 56"><path d="M0 5L6 50Q7 55 22 55T38 50L44 5Z" fill="url(#g-bin)" /><ellipse cx="22" cy="5" rx="21.500" ry="4.500" fill="#414648" stroke="#85898b" /></svg>
      </button>
    </nav>
  </div>
</template>

<style>
body {
  background: #000000;
}
</style>

<style scoped>
.desktop {
  position: relative;
  display: flex;
  flex-direction: column;
  box-sizing: border-box;
  min-height: 100vh;
  padding-bottom: 10px;
  overflow: hidden;
  background: linear-gradient(90deg, #6180af, #8b98a6 60%, #c9c4b8) 0 0 / 100% 110px no-repeat #000000;
  font-family: Inter, "Liberation Sans", sans-serif;
}
.defs,
.ground {
  position: absolute;
}
.ground {
  left: 0;
  bottom: 0;
  width: 100%;
  height: 100px;
}
button {
  display: flex;
  align-items: center;
  padding: 0;
  border: 0;
  background: none;
  color: inherit;
  font: inherit;
  white-space: nowrap;
}
svg {
  display: block;
  overflow: visible;
}
.menubar {
  display: flex;
  justify-content: space-between;
  align-items: center;
  height: 74px;
  padding: 0 34px 0 38px;
  background: linear-gradient(90deg, #5c7496 0%, #5d7697 27%, #687b93 36%, #6d8094 43%, #84909d 72%, #9199a4 88%, #9da0a2 100%);
  color: #f4f6f9;
  font-size: 25px;
  font-weight: 500;
  text-shadow: 0 2px 6px rgba(0, 0, 0, 0.3);
}
.menus,
.status {
  display: flex;
  align-items: center;
}
.menus {
  gap: 42px;
}
.app-name {
  font-size: 26px;
  font-weight: 700;
}
.menus svg,
.status svg {
  filter: drop-shadow(0 2px 3px rgba(0, 0, 0, 0.2));
}
.status {
  gap: 38px;
}
.playing {
  padding-right: 4px;
}
.bluetooth {
  padding-left: 6px;
}
.clock {
  gap: 18px;
  margin-left: -5px;
  font-variant-numeric: tabular-nums;
}
.window {
  position: relative;
  display: flex;
  flex: 1;
  flex-direction: column;
  margin: 2px 1px;
  border: 2px solid #58585a;
  border-radius: 20px;
  background: #1e1e1e;
  box-shadow: 0 0 0 1px #000000;
  overflow: hidden;
}
.titlebar {
  display: grid;
  grid-template-columns: 1fr auto 1fr;
  align-items: center;
  height: 74px;
  padding: 0 23px;
  border-bottom: 2px solid #151515;
  background: #232323;
  color: #9b9b9b;
  font-family: "Noto Sans", "Open Sans", sans-serif;
  font-size: 25px;
}
.left,
.lights,
.tabs,
.tools {
  display: flex;
  align-items: center;
}
.lights {
  gap: 16px;
}
.light {
  width: 24px;
  height: 24px;
  border-radius: 50%;
}
.close {
  background: #ff5f57;
}
.minimise {
  background: #febc2e;
}
.zoom {
  background: #28c840;
}
.home {
  margin: 0 62px 0 92px;
}
.tabs {
  gap: 47px;
}
.tabs a {
  padding-top: 2px;
  border-bottom: 4px solid transparent;
  color: inherit;
  line-height: 36px;
  text-decoration: none;
}
.tabs .active {
  border-color: #ececec;
  color: #f0f0f0;
}
h1 {
  margin: 0;
  font-size: 25px;
  font-weight: 400;
}
.tools {
  justify-content: flex-end;
  gap: 56px;
  margin-right: 30px;
}
.stage {
  display: flex;
  flex: 1;
  align-items: center;
  justify-content: center;
}
.statusbar {
  display: flex;
  justify-content: space-between;
  height: 38px;
  padding: 0 50px 0 1px;
  border-top: 4px solid #161616;
  background: #242424;
  color: #b9b9b9;
}
.grip {
  width: 1px;
  background: #2c2c2c;
}
.dock {
  position: relative;
  display: flex;
  align-items: center;
  align-self: center;
  gap: 16px;
  height: 80px;
  padding: 0 16px 0 12px;
  border: 2px solid #3f4142;
  border-radius: 24px;
  background: linear-gradient(90deg, #191919 0%, #1a1a1a 58%, #262c34 73%, #21252a 84%, #1c1f1f 100%);
}
.dock button {
  position: relative;
  margin-bottom: 6px;
}
.running::after {
  position: absolute;
  bottom: -16px;
  left: 50%;
  width: 8px;
  height: 8px;
  margin-left: -4px;
  border-radius: 50%;
  background: #9a9a9a;
  content: "";
}
.dock .large {
  margin-bottom: 8px;
}
.divider {
  width: 2px;
  height: 60px;
  margin: 0 2px 0 5px;
  background: #4c4f50;
}
.adobe {
  font-family: "Noto Sans", "Open Sans", sans-serif;
  font-size: 30px;
  font-weight: 600;
}
.big {
  font-size: 34px;
}
.month {
  fill: #ffffff;
  font-size: 10px;
  font-weight: 600;
}
.day {
  fill: #262626;
  font-size: 31px;
  font-weight: 300;
}
.badge {
  fill: #ffffff;
  font-size: 13px;
}
.aa {
  fill: #f3e7e7;
  font-family: "Liberation Serif", serif;
  font-size: 27px;
}
.white {
  color: #ffffff;
}
.petals {
  isolation: isolate;
}
.petals rect {
  mix-blend-mode: multiply;
}
.rainbow {
  width: 50px;
  height: 50px;
  border-radius: 12px;
  background: conic-gradient(#ff1a1a, #ff8a1a 45deg, #e9d821 90deg, #4cc94c 150deg, #35b8e8 190deg, #5f6cf0 225deg, #e83ad8 280deg, #ff1a8a 320deg, #ff1a1a);
}
</style>
